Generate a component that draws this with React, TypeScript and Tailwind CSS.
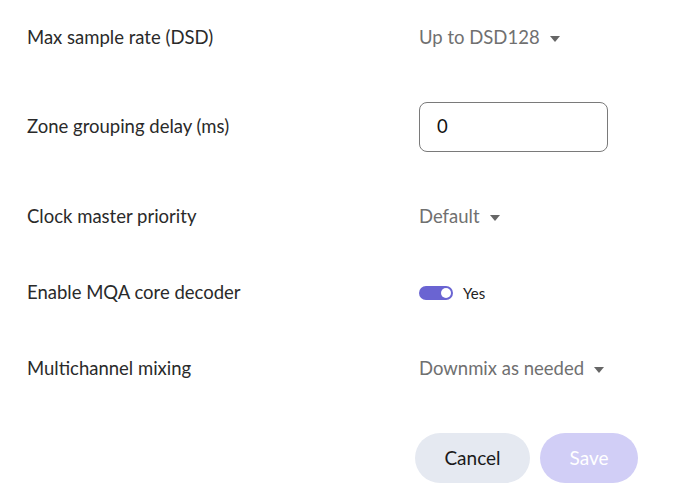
import React from "react";

function Caret() {
  return (
    <svg width="10" height="6" viewBox="0 0 10 6" className="ml-[10px] mt-[2px]">
      <path d="M0 0 L10 0 L5 6 Z" fill="#666666" />
    </svg>
  );
}

function Dropdown({ label }: { label: string }) {
  return (
    <div className="flex items-center text-[18.5px] text-[#707070]">
      <span>{label}</span>
      <Caret />
    </div>
  );
}

function Row({ h, label, children }: { h: string; label: string; children: React.ReactNode }) {
  return (
    <div className={`flex items-center ${h}`}>
      <div className="w-[392px] text-[18.5px] text-[#2a2a2a]">{label}</div>
      <div className="flex-1 flex items-center">{children}</div>
    </div>
  );
}

export default function App() {
  return (
    <div
      className="w-[684px] h-[499px] bg-white pl-[27px] flex flex-col"
      style={{ fontFamily: "Lato, 'Noto Sans', sans-serif" }}
    >
      <Row h="h-[76px]" label="Max sample rate (DSD)">
        <Dropdown label="Up to DSD128" />
      </Row>
      <Row h="h-[102px]" label="Zone grouping delay (ms)">
        <div className="w-[189px] h-[50px] border border-[#7a7a7a] rounded-[8px] flex items-center pl-[17px] text-[18.5px] text-[#111111]">
          0
        </div>
      </Row>
      <Row h="h-[78px]" label="Clock master priority">
        <Dropdown label="Default" />
      </Row>
      <Row h="h-[74px]" label="Enable MQA core decoder">
        <div className="flex items-center">
          <div className="w-[34px] h-[14px] rounded-full bg-[#6a64d2] flex items-center justify-end pr-[2px]">
            <div className="w-[10px] h-[10px] rounded-full bg-white" />
          </div>
          <span className="ml-[10px] text-[15px] text-[#222222]">Yes</span>
        </div>
      </Row>
      <Row h="h-[78px]" label="Multichannel mixing">
        <Dropdown label="Downmix as needed" />
      </Row>
      <div className="flex mt-[25px] pl-[388px] gap-[10px]">
        <button className="w-[115px] h-[50px] rounded-full bg-[#e5e9f1] text-[19px] text-[#1a1a1a]">
          Cancel
        </button>
        <button className="w-[98px] h-[50px] rounded-full bg-[#d1cef6] text-[19px] text-white">
          Save
        </button>
      </div>
    </div>
  );
}
